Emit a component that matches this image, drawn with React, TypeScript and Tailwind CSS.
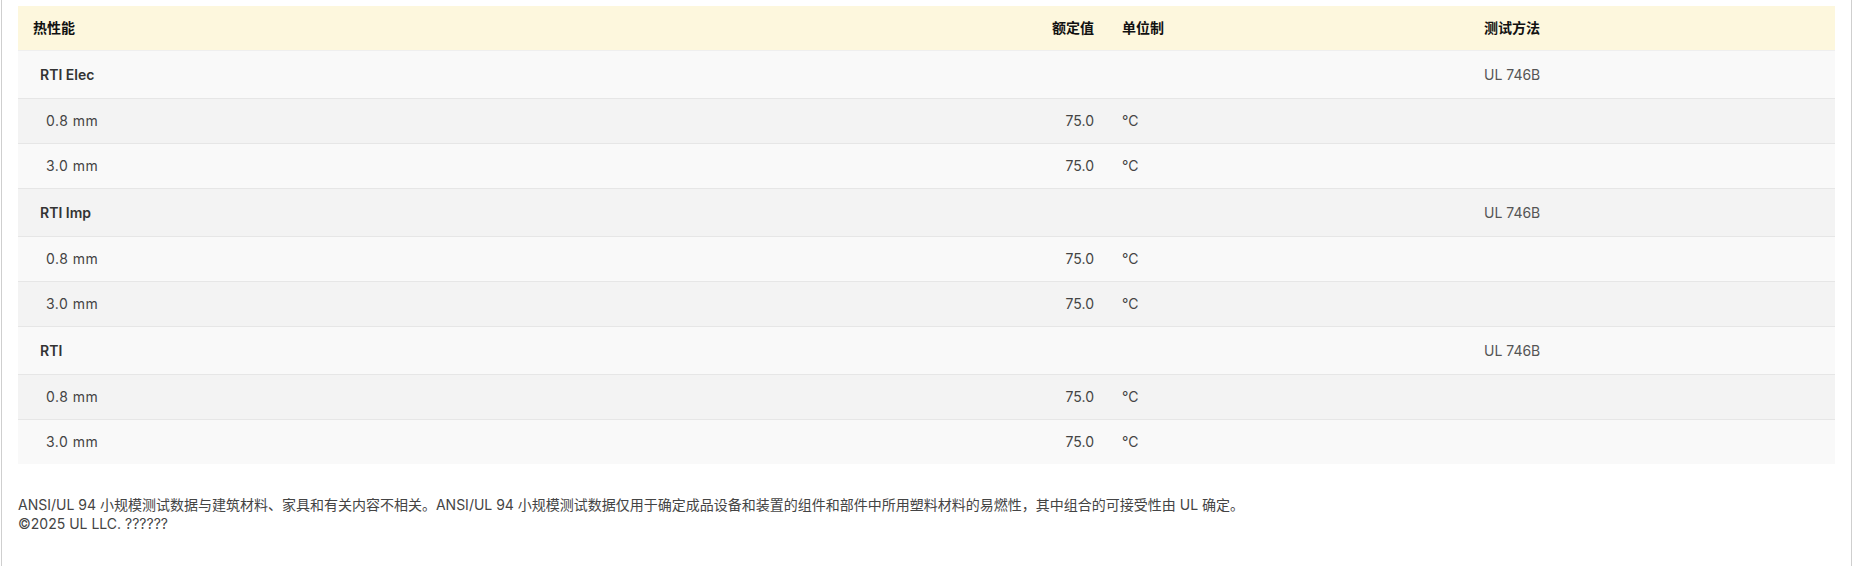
const groups = [
  { name: "RTI Elec", method: "UL 746B" },
  { name: "RTI Imp", method: "UL 746B" },
  { name: "RTI", method: "UL 746B" },
];

const subs = ["0.8 mm", "3.0 mm"];

export default function App() {
  let i = 0;
  const rows: { kind: "group" | "sub"; label: string; method?: string; stripe: boolean }[] = [];
  for (const g of groups) {
    rows.push({ kind: "group", label: g.name, method: g.method, stripe: i++ % 2 === 1 });
    for (const s of subs) {
      rows.push({ kind: "sub", label: s, stripe: i++ % 2 === 1 });
    }
  }

  return (
    <div className="mx-px min-h-screen border-x border-[#cfcfcf] bg-white px-4 pt-1.5 font-['Inter','Noto_Sans_CJK_SC',sans-serif] text-[14px] text-[#444]">
      <table className="w-full table-fixed border-collapse">
        <colgroup>
          <col className="w-[988px]" />
          <col className="w-[100px]" />
          <col className="w-[366px]" />
          <col />
        </colgroup>
        <thead>
          <tr className="h-[44px] bg-[#fdf7dd] text-[#111] font-bold">
            <th className="pl-[15px] text-left font-bold">热性能</th>
            <th className="pr-3 text-right font-bold">额定值</th>
            <th className="pl-4 text-left font-bold">单位制</th>
            <th className="pl-3 text-left font-bold">测试方法</th>
          </tr>
        </thead>
        <tbody>
          {rows.map((r, idx) => (
            <tr
              key={idx}
              className={
                (r.stripe ? "bg-[#f3f3f3] " : "bg-[#f9f9f9] ") +
                (r.kind === "group" ? "h-[48px] " : "h-[45px] ") +
                (idx === 0 ? "border-t border-[#efefef]" : "border-t border-[#e6e6e6]")
              }
            >
              {r.kind === "group" ? (
                <>
                  <td className="pl-[22px] font-semibold text-[#333]">{r.label}</td>
                  <td></td>
                  <td></td>
                  <td className="pl-3 text-[#555]">{r.method}</td>
                </>
              ) : (
                <>
                  <td className="pl-[28px] tracking-[0.5px]">{r.label}</td>
                  <td className="pr-3 text-right">75.0</td>
                  <td className="pl-4">°C</td>
                  <td></td>
                </>
              )}
            </tr>
          ))}
        </tbody>
      </table>
      <div className="mt-[31px] text-[14px] leading-[19px] text-[#444]">
        <p>
          ANSI/UL 94 小规模测试数据与建筑材料、家具和有关内容不相关。ANSI/UL 94 小规模测试数据仅用于确定成品设备和装置的组件和部件中所用塑料材料的易燃性，其中组合的可接受性由 UL 确定。
        </p>
        <p>©2025 UL LLC. ??????</p>
      </div>
    </div>
  );
}
